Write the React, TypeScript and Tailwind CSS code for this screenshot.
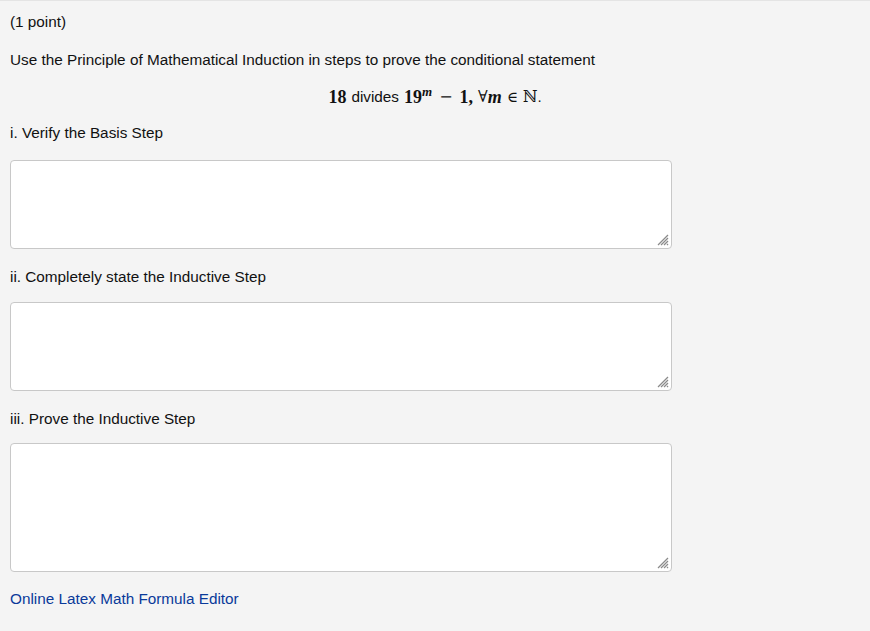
const serif = "font-['Liberation_Serif','DejaVu_Serif',serif]";

function Grip() {
  return (
    <svg
      className="absolute right-[3px] bottom-[3px] pointer-events-none"
      width="12"
      height="12"
      viewBox="0 0 12 12"
    >
      <g stroke="#8a8a8a" strokeWidth="1.2">
        <line x1="11" y1="1" x2="1" y2="11" />
        <line x1="11" y1="4" x2="4" y2="11" />
        <line x1="11" y1="7" x2="7" y2="11" />
        <line x1="11" y1="10" x2="10" y2="11" />
      </g>
    </svg>
  );
}

function Answer({ label, labelGap, boxGap, height }: { label: string; labelGap: string; boxGap: string; height: string }) {
  return (
    <div>
      <p className={labelGap}>{label}</p>
      <div className={`relative w-[662px] ${boxGap}`}>
        <textarea
          className={`block w-full ${height} bg-white border border-[#c8c8c8] rounded-[4px] resize-none outline-none`}
        />
        <Grip />
      </div>
    </div>
  );
}

export default function App() {
  return (
    <div className="w-[870px] h-[631px] bg-[#f4f4f4] border-t border-[#e4e4e4] text-[15.3px] leading-[16px] text-[#111] font-['Liberation_Sans',Arial,sans-serif]">
      <div className="px-[10px] pt-[13px]">
        <p>(1 point)</p>
        <p className="mt-[22px]">
          Use the Principle of Mathematical Induction in steps to prove the conditional statement
        </p>
        <div className="mt-[19px] h-[20px] flex items-center justify-center w-[850px] text-[18px]">
          <span className={`${serif} font-bold`}>18</span>
          <span className="text-[15.3px] ml-[5px] mr-[5px]">divides</span>
          <span className={`${serif} font-bold`}>
            19<sup className="italic text-[13px] -top-[7px]">m</sup>
          </span>
          <span className="mx-[7px] font-['DejaVu_Serif',serif] text-[16px]">−</span>
          <span className={`${serif} font-bold`}>1,</span>
          <span className="ml-[5px] font-['DejaVu_Serif',serif] text-[16px]">∀</span>
          <span className={`${serif} font-bold italic`}>m</span>
          <span className="mx-[5px] font-['DejaVu_Serif',serif] text-[15px]">∈</span>
          <span className="font-['DejaVu_Serif',serif] text-[16px]">ℕ</span>
          <span className="text-[15px]">.</span>
        </div>

        <Answer label="i. Verify the Basis Step" labelGap="mt-[18px]" boxGap="mt-[19px]" height="h-[89px]" />
        <Answer label="ii. Completely state the Inductive Step" labelGap="mt-[20px]" boxGap="mt-[17px]" height="h-[89px]" />
        <Answer label="iii. Prove the Inductive Step" labelGap="mt-[20px]" boxGap="mt-[16px]" height="h-[129px]" />

        <a href="#" className="block mt-[19px] text-[#0a3a9a]">
          Online Latex Math Formula Editor
        </a>
      </div>
    </div>
  );
}
